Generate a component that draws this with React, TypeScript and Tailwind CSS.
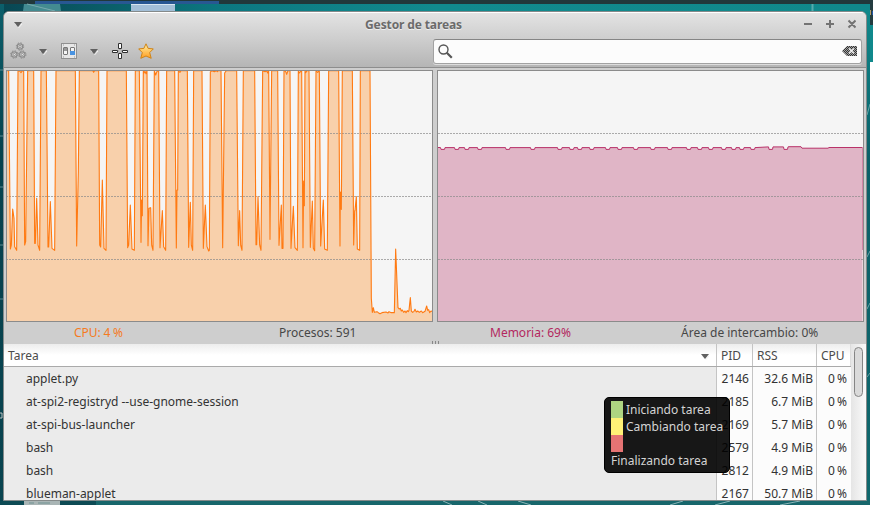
import React from "react";

const tasks = [
  ["applet.py", "2146", "32.6 MiB", "0 %"],
  ["at-spi2-registryd --use-gnome-session", "2185", "6.7 MiB", "0 %"],
  ["at-spi-bus-launcher", "2169", "5.7 MiB", "0 %"],
  ["bash", "2579", "4.9 MiB", "0 %"],
  ["bash", "2812", "4.9 MiB", "0 %"],
  ["blueman-applet", "2167", "50.7 MiB", "0 %"],
];

// CPU history, in thirds of a pixel
const cpuLine =
  "20,17 26,17 31,552 34,540 38,432 42,460 44,545 50,556 54,17 59,18 63,23 66,18 71,17 74,540 77,530 83,17 101,17 104,535 106,535 110,400 114,540 119,556 123,17 139,17 144,546 146,546 151,410 156,550 164,556 168,17 226,17 230,543 235,322 238,17 278,17 281,22 284,17 296,17 299,540 302,546 307,345 312,550 318,556 321,17 379,17 383,548 386,540 391,420 396,552 403,556 406,17 418,17 423,532 425,405 427,452 430,17 432,24 435,19 438,26 441,17 444,542 447,430 452,428 455,540 459,556 463,17 467,30 471,19 476,17 480,548 487,437 491,545 497,556 500,17 524,17 529,549 531,375 533,375 535,17 540,22 543,17 562,17 566,547 571,412 574,540 578,556 581,17 606,17 610,550 616,420 621,545 626,558 628,556 631,21 636,17 643,20 649,17 652,20 655,17 663,17 668,548 674,24 679,17 710,17 715,542 719,437 722,540 726,556 730,17 764,17 768,539 770,539 774,395 779,540 783,556 788,17 795,20 800,17 803,24 806,17 810,523 815,17 833,17 837,541 844,420 846,550 849,550 852,17 857,19 860,28 864,17 870,17 873,550 880,424 885,548 892,556 895,17 898,24 902,19 905,17 909,548 911,348 913,422 915,17 917,23 921,17 927,17 931,547 937,408 940,550 944,557 948,17 953,22 958,17 962,543 970,405 974,552 982,556 986,17 1016,17 1020,543 1021,381 1024,433 1027,17 1057,17 1061,540 1064,437 1065,437 1069,395 1072,552 1079,556 1081,17 1110,17 1114,700 1117,742 1120,728 1123,742 1131,740 1135,743 1140,746 1146,743 1158,741 1164,744 1167,740 1174,743 1183,743 1187,552 1194,728 1198,732 1201,730 1204,738 1207,735 1211,742 1215,738 1218,743 1222,737 1225,740 1227,736 1231,698 1234,738 1238,742 1242,739 1245,733 1249,741 1253,738 1258,742 1264,738 1268,743 1275,739 1280,723 1283,736 1286,734 1289,743 1293,738 1299,740";

// Positions of the small dips in memory usage
const dips = [443, 457, 467, 480, 508, 533, 560, 572, 580, 592, 608, 620, 636, 653, 670, 689, 700, 711, 724, 734, 742, 753, 771, 786];
const memLine =
  "437.5,147.5 440,147.5 " +
  dips.map((x, i) => {
    const y = i > 21 ? 146.9 : 147.6;
    return `${x - 2.5},${y} ${x - 2},149.4 ${x + 1.5},149.4 ${x + 2},${y}`;
  }).join(" ") +
  " 789,146.7 801,146.7 802,148.2 828,148.2 829,147.5 862.5,147.5";

function Grid() {
  return (
    <g stroke="#8a8a8a" strokeOpacity=".7" strokeDasharray="2 1">
      <path d="M0 133.5H873M0 196.5H873M0 259.5H873" />
    </g>
  );
}

function Caret() {
  return (
    <svg width="9" height="6" viewBox="0 0 9 6">
      <path d="M1 2 8 2 4.5 6" stroke="#f2f2f2" fill="none" />
      <path d="M0 0h8L4 5z" fill="#606060" />
    </svg>
  );
}

function Gear({ x, y }: { x: number; y: number }) {
  return (
    <g transform={`translate(${x} ${y})`}>
      <circle r="3.7" fill="none" stroke="#8b8b8b" strokeWidth="1" strokeDasharray="1.45 1.45" />
      <circle r="2.7" fill="#d8d8d8" stroke="#8c8c8c" strokeWidth="1.2" />
      <circle r="1.1" fill="#eee" stroke="#888" strokeWidth=".9" />
    </g>
  );
}

function Wallpaper() {
  return (
    <svg className="absolute inset-0" width="873" height="505">
      <defs>
        <linearGradient id="desk"><stop stopColor="#084652" /><stop offset=".25" stopColor="#0c7780" /><stop offset=".5" stopColor="#118a8e" /><stop offset="1" stopColor="#10888b" /></linearGradient>
        <linearGradient id="side" x2="0" y2="1"><stop stopColor="#0b5f6b" /><stop offset=".3" stopColor="#06414d" /><stop offset="1" stopColor="#094450" /></linearGradient>
        <linearGradient id="edge" x2="0" y2="1"><stop stopColor="#10888b" /><stop offset=".3" stopColor="#0a6068" /><stop offset="1" stopColor="#11696e" /></linearGradient>
      </defs>
      <path d="M0 0H873V505H0z" fill="url(#desk)" />
      <path d="M0 4H4V505H0z" fill="url(#side)" />
      <path d="M0 0H873V4H0z" fill="#21383b" />
      <path d="M35 1H219V4H35z" fill="#285792" />
      <path d="M24 4H60L61 11H23z" fill="#438b91" />
      <path d="m27 4 28 7" stroke="#78aaae" />
      <path d="M131 5H175V11H131z" fill="#a3bfd7" /><path d="M131 4.5H175" stroke="#d8e6ef" />
      <path d="M812.5 4V11" stroke="#55aaad" strokeWidth="2" />
      <path d="M867 11H870V505H867z" fill="url(#edge)" />
      <path d="m867 115 3-11M867 257l3-6M867 309l3-6M867 377l3-4" stroke="#6aa3a6" />
      <path d="M870 0H873V25H870z" fill="#233c40" />
      <path d="M870 10H871V15H870z" fill="#b29a6b" /><path d="M872 11H873V15H872z" fill="#2456a5" />
      <path d="M870 25H873V62H870z" fill="#10898c" />
      <path d="M0 501H870V505H0z" fill="#17666b" />
      <path d="M0 501H96V505H0z" fill="#0d4a54" />
      <path d="M24 501H60V505H24z" fill="#a9b5b5" />
      <path d="M29 503H34M38 503H50" stroke="#6e9191" />
      <path d="M0 70H4M0 136H4M0 187H4M0 245H4M0 299H4" stroke="#5d8a93" />
      <path d="M0 413H2V418H0" fill="none" stroke="#bcc3c3" />
      <path d="m443 501 9 4m26-4 9 4m31-4 13 4m139 0 13-4m32 4 15-4m50 4 20-4" stroke="#8ab5b8" />
      <path d="M870 62H873V505H870z" fill="#fff" />
    </svg>
  );
}

function Toolbar() {
  return (
    <div className="flex h-[30px] items-center pl-[6px] pr-1 pb-[1px]">
      <div className="flex h-full items-center pb-[2px]">
        <svg className="h-[18px] w-[18px] shrink-0" viewBox="0 0 18 18">
          <Gear x={10} y={4.5} /><Gear x={4.3} y={12.5} /><Gear x={12.3} y={12.5} />
        </svg>
        <div className="ml-[11px] mt-[3px]"><Caret /></div>
        <svg className="ml-[13px] h-4 w-4 shrink-0" viewBox="0 0 16 16">
          <rect x=".5" y=".5" width="15" height="15" fill="#e7e7e7" stroke="#909090" />
          <rect x="2.5" y="4.5" width="4" height="7" rx=".5" fill="#f5f5f5" stroke="#777" />
          <path d="M3 5H6V8H3z" fill="#999" />
          <rect x="9.5" y="4.5" width="4" height="7" rx=".5" fill="#f5f5f5" stroke="#777" />
          <path d="M9 8H14V12H9z" fill="#4993e1" />
          <path d="M2 2H3M13 2H14M2 14H3M13 14H14" stroke="#999" />
        </svg>
        <div className="ml-[13px] mt-[3px]"><Caret /></div>
        <svg className="ml-[13px] h-4 w-4 shrink-0" viewBox="0 0 16 16" fill="#fff" stroke="#303030">
          <path d="M6.5.5h3v5h-3zM6.5 10.5h3v5h-3zM.5 7.5h5v2h-5zM10.5 7.5h5v2h-5z" />
          <path d="M7 6.5H9M7 9.5H9M6.5 7V9M9.5 7V9" stroke="#aaa" />
        </svg>
        <svg className="ml-[10px] h-4 w-4 shrink-0" viewBox="0 0 16 16">
          <defs><linearGradient id="star" x2="0" y2="1"><stop stopColor="#fff1a4" /><stop offset="1" stopColor="#ff9d20" /></linearGradient></defs>
          <path d="m8 .8 2.1 4.6 5.2.5-3.6 3.7 1.5 5.7L8 13l-5.2 2.3 1.5-5.7L.7 5.9l5.2-.5z" fill="url(#star)" stroke="#cf8418" strokeLinejoin="round" />
        </svg>
      </div>
      <div className="ml-auto flex h-[25px] w-[429px] shrink-0 items-center justify-between rounded-[3px] border border-[#a2a2a2] border-t-[#858585] bg-[#fcfcfc] pl-1 pr-[3px] shadow-[0_1px_0_#ddd]">
        <svg width="16" height="16" viewBox="0 0 16 16" fill="none" stroke="#555"><circle cx="5.5" cy="5.5" r="4.5" strokeWidth="1.4" /><path d="m8.8 8.8 5 5" strokeWidth="2.2" /></svg>
        <svg width="16" height="11" viewBox="0 0 16 11">
          <defs><pattern id="check" width="2" height="2" patternUnits="userSpaceOnUse"><path d="M0 0H2V2H0z" fill="#333" /><path d="M0 0H1V1H0zM1 1H2V2H1z" fill="#a2a2a2" /></pattern></defs>
          <path d="M0 5 5 0H15V10H5z" fill="url(#check)" /><path d="m7 2.5 5 5m0-5-5 5" stroke="#eee" strokeWidth="1.5" />
        </svg>
      </div>
    </div>
  );
}

export default function App() {
  return (
    <div className="relative h-[505px] w-[873px] overflow-hidden font-['Noto_Sans',sans-serif] text-[12px] leading-[17px] text-[#333]">
      <Wallpaper />
      <main className="absolute left-[3px] top-[11px] flex h-[490px] w-[864px] flex-col overflow-hidden rounded-t-[6px] border border-[#858a8a] bg-[#cecece]">
        <header className="h-[56px] shrink-0 border-b border-b-[#8d8d8d] border-t border-t-white bg-linear-to-b from-[#e3e3e3] via-[#cdcdcd] to-[#b5b5b5]">
          <div className="flex h-[24px] items-center pb-[2px] pl-[10px] pr-[10px]">
            <div className="w-[60px] pt-[1px]"><Caret /></div>
            <h1 className="flex-1 pr-[51px] text-center text-[12px] font-bold tracking-[-0.12px] text-[#6b6b6b] [text-shadow:0_1px_0_#eee]">Gestor de tareas</h1>
            <svg width="52" height="10" viewBox="0 0 52 10" fill="none" stroke="#737373" strokeWidth="2"><path d="M0 5H8M22 5H30M26 1V9M44.5 1.5l7 7m0-7-7 7" /></svg>
          </div>
          <Toolbar />
        </header>
        <section className="flex h-[254px] shrink-0 gap-1 px-[2px] pt-[2px]">
          <svg className="h-[252px] w-[427px] border border-[#8b8b8b] bg-[#f5f5f5]" viewBox="7 71 425 250">
            <polygon points={`20,770 ${cpuLine} 1299,770`} transform="translate(0 65) scale(.33333)" fill="#ff7a00" fillOpacity=".3" />
            <Grid />
            <polyline points={cpuLine} transform="translate(0 65) scale(.33333)" fill="none" stroke="#ff7a12" strokeWidth="3.3" strokeLinejoin="round" />
          </svg>
          <svg className="h-[252px] w-[427px] border border-[#8b8b8b] bg-[#f5f5f5]" viewBox="438 71 425 250">
            <polygon points={`437,322 ${memLine} 862.5,322`} fill="#ab1852" fillOpacity=".29" />
            <Grid />
            <polyline points={memLine} fill="none" stroke="#b93269" />
            <path d="M862.5 148V250" stroke="#c8648f" strokeOpacity=".7" />
          </svg>
        </section>
        <div className="flex h-[19px] shrink-0 items-center pt-[2px] text-[#474747]">
          <span className="ml-[70px] w-[205px] whitespace-nowrap text-[#f57b1e] [word-spacing:-0.5px]">CPU: 4 %</span>
          <span className="w-[211px] whitespace-nowrap">Procesos: 591</span>
          <span className="w-[191px] whitespace-nowrap text-[#b3285f]">Memoria: 69%</span>
          <span className="whitespace-nowrap">Área de intercambio: 0%</span>
        </div>
        <div className="flex h-[3px] shrink-0 justify-center gap-[2px]"><i className="w-px bg-[#888]" /><i className="w-px bg-[#888]" /><i className="w-px bg-[#888]" /></div>
        <section className="flex h-[156px] shrink-0 overflow-hidden bg-[#fcfcfc]">
          <div className="w-[847px] shrink-0">
            <div className="grid h-[23px] grid-cols-[713px_36px_64px_34px] border-b border-[#aaa] bg-linear-to-b from-[#ededed] via-white to-white text-[#4b4b4b]">
              <div className="flex items-center justify-between border-r border-[#c4c4c4] pl-1 pr-[6px]">Tarea<div className="pt-[3px]"><Caret /></div></div>
              <div className="flex items-center border-r border-[#c4c4c4] pl-1">PID</div>
              <div className="flex items-center border-r border-[#c4c4c4] pl-1">RSS</div>
              <div className="flex items-center border-r border-[#dcdcdc] pl-1">CPU</div>
            </div>
            {tasks.map((task, i) => (
              <div key={i} className="grid h-[23px] grid-cols-[713px_36px_64px_34px] leading-[23px]">
                <div className="border-r border-[#c4c4c4] bg-[#ebebeb] pl-[22px]">{task[0]}</div>
                <div className="border-r border-[#c4c4c4] pr-[3px] text-right">{task[1]}</div>
                <div className="border-r border-[#c4c4c4] pr-[3px] text-right">{task[2]}</div>
                <div className="pr-1 text-right [word-spacing:-1px]">{task[3]}</div>
              </div>
            ))}
          </div>
          <div className="flex-1 bg-linear-to-r from-[#e5e5e5] to-[#fafafa] pl-[3px] pt-[3px]"><div className="h-[50px] w-[9px] rounded-full border border-[#858585] bg-[#dadada]" /></div>
        </section>
      </main>
      <aside className="absolute left-[604px] top-[397px] h-[76px] w-[126px] rounded-[5px] border border-black bg-black/90 px-[6px] pt-[3px] text-[#d4d4d4]">
        <div className="flex h-[17px] items-center gap-[3px]"><i className="h-[17px] w-3 shrink-0 bg-[#aed581]" /><span className="whitespace-nowrap">Iniciando tarea</span></div>
        <div className="flex h-[17px] items-center gap-[3px]"><i className="h-[17px] w-3 shrink-0 bg-[#fff176]" /><span className="whitespace-nowrap">Cambiando tarea</span></div>
        <i className="block h-[17px] w-3 bg-[#e57373]" />
        <div className="whitespace-nowrap">Finalizando tarea</div>
      </aside>
    </div>
  );
}
